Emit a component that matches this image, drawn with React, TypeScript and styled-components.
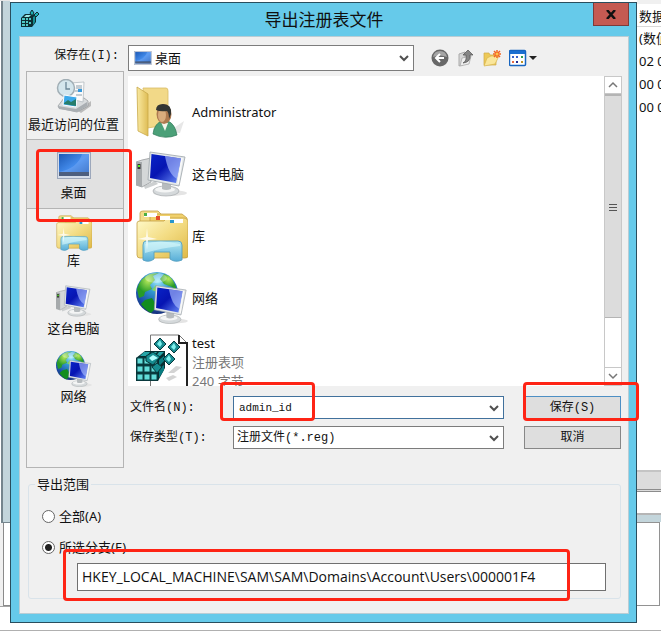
import React, { useState } from "react";
import styled, { createGlobalStyle, css } from "styled-components";

const ui = `"Noto Sans", "Noto Sans CJK SC", sans-serif`;
const fixed = `"Liberation Mono", "Noto Sans CJK SC", monospace`;

const GlobalStyle = createGlobalStyle`
  *, *::before, *::after { box-sizing: border-box; }
  body { margin: 0; background: #fff; color: #111; font: 13px/18px ${ui}; }
  button, input, select { font: inherit; color: inherit; margin: 0; }
`;

const Desktop = styled.div`
  display: grid;
  grid-template-columns: 10px 1fr 24px;
  min-height: 100vh;
  overflow: hidden;
  border-bottom: 1px solid #b0b0b0;
`;

const LeftEdge = styled.div`
  display: flex;
  flex-direction: column;
  border-top: 1px solid #e6e6e6;
`;
const FrameStrip = styled.div`
  height: 522px;
  margin-left: 1px;
  border-left: 2px solid #75858d;
  border-bottom: 1px solid #75858d;
  background: #c3d5db;
`;
const LowerStrip = styled.div`
  height: 84px;
  border-bottom: 1px solid #a5a5a5;
  padding-left: 3px;
  background: #f0f0f0;
  &::before {
    content: "";
    display: block;
    height: 83px;
    border-left: 1px solid #8a8a8a;
    border-bottom: 1px solid #8a8a8a;
    background: #fff;
  }
`;

const RightEdge = styled.div`
  display: flex;
  flex-direction: column;
  overflow: hidden;
  white-space: nowrap;
  border-top: 4px solid #f0f0f0;
`;
const ColumnHead = styled.div`
  height: 23px;
  padding: 3px 0 0 2px;
  border-bottom: 1px solid #d8d8d8;
`;
const ValueList = styled.div`
  height: 443px;
  padding-left: 2px;
  line-height: 23px;
`;
const ScrollStrip = styled.div`
  height: 22px;
  background: #dcdcdc;
  border-top: 2px solid #c4c4c4;
  border-bottom: 3px double #8c8c8c;
`;
const StatusStrip = styled.div`
  height: 30px;
  border-bottom: 7px solid #c3d5db;
  box-shadow: inset 0 -2px #b5b5b5;
`;
const LowerPane = styled.div`
  height: 84px;
  margin-right: 1px;
  border: 1px solid #929292;
  border-left: 0;
`;

const Dialog = styled.section`
  position: relative;
  z-index: 1;
  display: flex;
  flex-direction: column;
  align-self: start;
  min-width: 0;
  margin-top: 2px;
  padding: 0 7px 8px 8px;
  border: 1px solid #294e5e;
  background: #66caea;
`;
const TitleBar = styled.header`
  display: grid;
  grid-template-columns: 36px 1fr 36px;
  height: 33px;
  h1 {
    margin: 0;
    align-self: center;
    text-align: center;
    font-size: 17px;
    line-height: 22px;
    font-weight: 400;
    color: #101010;
  }
`;
const TitleIcon = styled.span`
  padding: 7px 0 0 2px;
`;
const CloseButton = styled.button`
  height: 23px;
  padding: 0;
  border: 1px solid #7d3a3a;
  border-top: 0;
  background: #c55a52;
  display: grid;
  place-items: center;
`;

const Panel = styled.div`
  border: 1px solid #b9cdd5;
  background: #f0f0f0;
  padding: 8px 6px 14px 6px;
`;
const Browser = styled.div`
  display: grid;
  grid-template-columns: 98px 1fr;
  column-gap: 4px;
`;
const FixedLabel = styled.label`
  font: 12px/18px ${fixed};
  white-space: nowrap;
`;
const LookInLabel = styled(FixedLabel)`
  justify-self: end;
  padding: 2px 5px 0 0;
`;
const LookInBar = styled.div`
  display: grid;
  grid-template-columns: minmax(0, 286px) auto;
  justify-content: start;
  align-items: center;
  column-gap: 17px;
  height: 26px;
  margin-bottom: 5px;
`;
const Combo = styled.div<{ $tall?: boolean; $active?: boolean }>`
  position: relative;
  display: flex;
  align-items: center;
  min-width: 0;
  height: ${(p) => (p.$tall ? 26 : 23)}px;
  border: 1px solid ${(p) => (p.$active ? "#41719c" : "#7c7c7c")};
  background: #fff;
  > svg:last-child {
    position: absolute;
    right: 4px;
    pointer-events: none;
  }
`;
const comboField = css`
  flex: 1;
  width: 100%;
  min-width: 0;
  height: 100%;
  border: 0;
  outline: 0;
  padding: 0 18px 0 3px;
  background: transparent;
  appearance: none;
`;
const ComboSelect = styled.select<{ $icon?: boolean }>`
  ${comboField}
  ${(p) =>
    p.$icon
      ? css`
          margin-left: -24px;
          padding-left: 26px;
        `
      : css`
          font: 12px/18px ${fixed};
        `}
`;
const ComboIcon = styled.span`
  display: flex;
  width: 24px;
  padding-left: 5px;
`;
const NameInput = styled.input`
  ${comboField}
  padding-left: 5px;
  font: 11px/16px ${fixed};
`;
const Tools = styled.div`
  display: flex;
  gap: 8px;
`;
const ToolButton = styled.button`
  display: flex;
  padding: 0;
  border: 0;
  background: none;
`;

const Places = styled.nav`
  border: 1px solid #b4b4b4;
  height: 397px;
  margin-top: -5px;
`;
const Place = styled.button<{ $current?: boolean }>`
  position: relative;
  display: flex;
  flex-direction: column;
  align-items: center;
  width: 100%;
  height: 68px;
  padding: 7px 3px 0 0;
  border: 0;
  background: ${(p) => (p.$current ? "#e1e1e1" : "none")};
  box-shadow: ${(p) => (p.$current ? "0 -1px #b4b4b4, 0 1px #b4b4b4" : "none")};
  white-space: nowrap;
`;
const PlaceIcon = styled.span`
  display: grid;
  place-items: center;
  height: 36px;
`;

const FileList = styled.div`
  display: grid;
  grid-template-columns: 1fr 18px;
  grid-template-rows: minmax(0, 1fr);
  height: 310px;
  overflow: hidden;
  background: #fff;
`;
const Files = styled.ul`
  margin: 0;
  padding: 5px 0 0 8px;
  list-style: none;
`;
const FileRow = styled.li`
  display: flex;
  align-items: center;
  gap: 4px;
  min-height: 62px;
  small {
    display: block;
    font-size: 13px;
    color: #777;
  }
  &:last-child {
    min-height: 66px;
  }
`;
const FileText = styled.div`
  line-height: 19px;
`;
const Scrollbar = styled.div`
  display: grid;
  grid-template-rows: 18px 224px 1fr 18px;
  border: 1px solid #c8c8c8;
  border-top: 0;
`;
const ScrollButton = styled.button`
  display: grid;
  place-items: center;
  padding: 0;
  border: 1px solid #c8c8c8;
  border-width: 1px 0;
  background: #fff;
`;
const Thumb = styled.div`
  display: grid;
  place-items: center;
  background: #dcdcdc;
  border: 1px solid #b4b4b4;
  border-width: 2px 0 1px;
`;
const SaveForm = styled.div`
  display: grid;
  grid-template-columns: 98px 1fr 97px;
  column-gap: 20px;
  row-gap: 7px;
  align-items: center;
  margin-top: 10px;
  padding-right: 1px;
  > label { padding-left: 2px; }
`;
const FormField = styled.div`
  position: relative;
  margin-left: -13px;
`;
const ActionSlot = styled.div`
  position: relative;
`;
const ActionButton = styled.button<{ $primary?: boolean }>`
  display: block;
  width: 100%;
  height: 23px;
  padding: 0;
  border: 1px solid ${(p) => (p.$primary ? "#4d8fc4" : "#878787")};
  background: #dedede;
  font: 12px/18px ${fixed};
`;

const Scope = styled.fieldset`
  margin: 7px 1px 0 2px;
  padding: 14px 14px 7px 13px;
  min-width: 0;
  border: 1px solid #d9e3ea;
  border-radius: 3px;
  legend {
    margin-left: -7px;
    padding: 0 2px;
  }
`;
const Choice = styled.label`
  display: flex;
  align-items: center;
  gap: 4px;
  height: 18px;
  margin-bottom: 13px;
  &:nth-of-type(2) { margin-bottom: 7px; }
`;
const Radio = styled.input`
  appearance: none;
  flex: none;
  width: 13px;
  height: 13px;
  border: 1px solid #666;
  border-radius: 50%;
  background: #fff;
  &:checked {
    background: radial-gradient(circle, #202020 0 3px, #fff 4px);
  }
`;
const BranchSlot = styled.div`
  position: relative;
  margin-left: 35px;
`;
const BranchInput = styled.input`
  display: block;
  width: 100%;
  height: 28px;
  padding: 0 4px 2px;
  border: 1px solid #707070;
  border-radius: 0;
  background: #fff;
  outline: 0;
  font-family: "Open Sans", sans-serif;
  font-size: 14px;
`;

const Marker = styled.span<{ $kind: "place" | "name" | "save" | "branch" }>`
  position: absolute;
  z-index: 2;
  pointer-events: none;
  border: 3px solid #fe2415;
  border-radius: 4px;
  ${(p) =>
    ({
      place: "left: 9px; top: 9px; width: 96px; height: 73px;",
      name: "left: -13px; top: -14px; width: 95px; height: 39px;",
      save: "left: -1px; right: -18px; top: -14px; height: 39px;",
      branch: "left: -14px; top: -14px; width: 507px; height: 52px;",
    })[p.$kind]}
`;

const Chevron = ({ up, light }: { up?: boolean; light?: boolean }) => (
  <svg width="10" height="8" viewBox="0 0 10 8" fill="none" stroke={light ? "#777" : "#505050"} strokeWidth={light ? 1.5 : 2}>
    <path d={up ? "M1 6L5 2L9 6" : "M1 2L5 6L9 2"} />
  </svg>
);

const MonitorArt = () => (
  <>
    <ellipse cx="34" cy="43" rx="17" ry="3" fill="#e4e4e4" />
    <ellipse cx="30" cy="41" rx="13" ry="5" fill="#d5d9db" stroke="#a6abad" strokeWidth=".7" />
    <ellipse cx="29" cy="39.5" rx="10" ry="3" fill="#f4f5f5" />
    <path d="M26 31h9v8q-5 2-9 0z" fill="#b6bbbe" />
    <path d="M14 2L49 7L43 36L12 30Z" fill="#e4e8ea" stroke="#9da5aa" strokeWidth=".8" />
    <path d="M15.500 4L45 8.500L40 33L14 28Z" fill="url(#screen)" />
    <path d="M29 6L45 8.500L41 29Q32 24 29 6Z" fill="#a9bdff" opacity=".65" />
    <path d="M46 8L42 34" stroke="#fafafa" strokeWidth="1.5" />
  </>
);

const Computer = ({ size = 52 }: { size?: number }) => (
  <svg width={size} height={size} viewBox="0 0 52 48">
    <defs>
      <linearGradient id="screen" x2="1" y2="1">
        <stop stopColor="#0924c8" /><stop offset=".45" stopColor="#0614b2" /><stop offset="1" stopColor="#6e92fb" />
      </linearGradient>
    </defs>
    <path d="M8 36L19 31L22 34L9 39Z" fill="#cccfd0" />
    <path d="M0 12L6 10L15 8L15 32L6 37L0 35Z" fill="#d4d7d8" stroke="#979b9d" strokeWidth=".8" />
    <path d="M0 12L6 12L6 37L0 35Z" fill="#a6aaac" />
    <rect x="1.500" y="14" width="3" height="5" fill="#333" /><rect x="2" y="15" width="2" height="2" fill="#55ed22" />
    <MonitorArt />
  </svg>
);

const Globe = ({ size = 52 }: { size?: number }) => (
  <svg width={size} height={size} viewBox="0 0 52 52">
    <defs>
      <radialGradient id="sea" cx=".52" cy=".22" r=".8">
        <stop stopColor="#9fe9fa" /><stop offset=".35" stopColor="#3297d0" /><stop offset=".75" stopColor="#1b4fa6" /><stop offset="1" stopColor="#172e78" />
      </radialGradient>
      <radialGradient id="land" cx=".5" cy=".3"><stop stopColor="#b5e95b" /><stop offset="1" stopColor="#279b28" /></radialGradient>
    </defs>
    <circle cx="21" cy="21" r="21" fill="url(#sea)" />
    <path d="M14 2Q4 6 1 17L3 26L8 24L9 20L16 17L14 13L19 8L17 4L23 1Z" fill="url(#land)" />
    <path d="M28 2L24 7L28 12L36 15L41 19Q39 9 33 4Z" fill="url(#land)" />
    <path d="M9 28L16 26L19 31L18 38L15 41Q9 38 5 32Z" fill="#128d20" />
    <path d="M20 13L24 16L21 20L16 18Z" fill="#7bd760" />
    <ellipse cx="20" cy="6" rx="11" ry="5" fill="#fff" opacity=".3" />
    <g transform="translate(8 12) scale(.86)"><MonitorArt /></g>
  </svg>
);

const Library = ({ size = 52 }: { size?: number }) => (
  <svg width={size} height={size} viewBox="0 0 52 52">
    <defs>
      <linearGradient id="lib" x2="1" y2="1"><stop stopColor="#fffacb" /><stop offset=".5" stopColor="#f3dc83" /><stop offset="1" stopColor="#dfb947" /></linearGradient>
      <linearGradient id="stand" x2="0" y2="1"><stop stopColor="#b5eaf2" /><stop offset="1" stopColor="#57add7" /></linearGradient>
    </defs>
    <g stroke="#c4a044" strokeWidth=".8">
      <path d="M4 13V3Q4 1 7 1H22L25 4V13Z" fill="#f3dc8a" />
      <path d="M14 13V7L18 4H46L51 8V17H14Z" fill="#f0d06b" />
      <path d="M1 13Q1 11 4 11H28L31 8H47Q52 8 52 12V46Q52 48 49 48H4Q1 48 1 45Z" fill="url(#lib)" />
    </g>
    <path d="M8 3h13v4H8zM20 6h14v4H20zM34 9h13v4H34z" fill="#fff" />
    <rect x="8" y="3" width="3" height="3" fill="#4caf42" /><rect x="20" y="6" width="4" height="4" fill="#e34c2a" /><rect x="34" y="10" width="4" height="3" fill="#2696cd" />
    <path d="M10 31H42Q46 31 46 35V50Q39 53 34 49V42H18V49Q13 53 7 50V35Q7 31 10 31Z" fill="url(#stand)" stroke="#569fc0" strokeWidth=".9" />
    <path d="M9 34Q23 29 44 34V36Q25 38 9 43Z" fill="#d9f8fb" opacity=".6" />
    <path d="M11 18L12 27L21 29L12 30L11 40L10 30L2 29L10 27Z" fill="#fff" opacity=".8" />
  </svg>
);

const UserFolder = () => (
  <svg width="52" height="52" viewBox="0 0 52 52">
    <defs><linearGradient id="fold" x2="1"><stop stopColor="#f9e9a1" /><stop offset="1" stopColor="#dfbd56" /></linearGradient></defs>
    <path d="M32 46L48 35L44 47Z" fill="#e7e7e7" />
    <path d="M7 2H30Q32 2 32 5V39L11 42Z" fill="#f2d988" stroke="#d8bb66" strokeWidth=".8" />
    <path d="M1 1L12 8V50L2 45Z" fill="url(#fold)" stroke="#c8a849" strokeWidth=".8" />
    <path d="M17 48Q18 37 27 35H32Q39 38 41 49Q29 54 17 48Z" fill="#4ba078" stroke="#2d7756" strokeWidth=".7" />
    <path d="M25 36L29 45L32 37Z" fill="#f5f5ec" />
    <ellipse cx="28" cy="28" rx="7.500" ry="10" fill="#ae7a50" />
    <ellipse cx="26" cy="29" rx="4" ry="7" fill="#d9ac7d" />
    <path d="M20 24Q20 18 27 18Q36 18 35 28L33 33Q33 27 31 25Q24 26 20 24Z" fill="#343633" />
  </svg>
);

const Screen = ({ size = 34 }: { size?: number }) => (
  <svg width={size} height={Math.round(size * 0.79)} viewBox="0 0 34 27">
    <defs><linearGradient id="desk" x2="1" y2="1"><stop stopColor="#1c59b5" /><stop offset=".5" stopColor="#438beb" /><stop offset="1" stopColor="#1852ab" /></linearGradient></defs>
    <rect x=".5" y=".5" width="33" height="26" fill="#d5dde9" stroke="#9ca7bb" />
    <rect x="2" y="2" width="30" height="22" fill="url(#desk)" />
    <path d="M2 20Q21 16 25 2H32V20Z" fill="#8ebaff" opacity=".35" />
    <rect x="2" y="20" width="30" height="4" fill="#4d5f7f" />
  </svg>
);

const Recent = () => (
  <svg width="36" height="36" viewBox="0 0 36 36">
    <path d="M22 32L35 22V27L25 34Z" fill="#bbb" />
    <path d="M2 27L8 19H28L32 22V27L21 33L3 29Z" fill="#d8dbdd" stroke="#8f9497" strokeWidth=".7" />
    <path d="M2 27L20 30L31 23V27L21 33L3 30Z" fill="#a9aeb2" />
    <path d="M14 4L28 3L27 23L15 20Z" fill="#fafafa" stroke="#abb3b9" strokeWidth=".7" />
    <path d="M20 7h6M20 9h6M19 12h7M20 16h6" stroke="#8b9eac" /><path d="M22 10h4v3h-4z" fill="#3599dc" />
    <circle cx="10" cy="9" r="8.500" fill="#d4e6ed" stroke="#a1aeb5" strokeWidth="1.500" />
    <path d="M10 3V10H14" stroke="#6b8797" strokeWidth="1.300" fill="none" />
    <path d="M8 16L21 18L20 28L7 26Z" fill="#3ca9ea" stroke="#fff" />
    <path d="M8 24L12 21L15 23L20 20V27L8 25Z" fill="#267d6b" />
  </svg>
);

const Cube = () => (
  <>
    <path d="M0 24L9 17H29V34L22 47H0Z" fill="#062f32" />
    <g fill="#62dcd9" stroke="#0c4548">
      {[24, 32, 40].map((y) => [1, 8, 15].map((x) => <rect key={`${x}-${y}`} x={x} y={y} width="6" height="6" />))}
    </g>
    <path d="M8 18h6l-3 4H4zM16 18h5l-3 4h-6zM23 18h5l-5 5h-4z" fill="#25a5a7" />
    <path d="M23 26l5-4v5l-5 5zM23 35l5-4v5l-5 8z" fill="#087d81" />
    <path d="M10 22l7-4 7 5-7 8-7-4z" fill="#168d91" stroke="#06383b" /><path d="M13 24l4-3 5 3-6 3z" fill="#b4ffff" />
    <path d="M16 33l5-4 5 4-5 6z" fill="#168d91" stroke="#06383b" />
  </>
);
const Diamond = ({ x, y }: { x: number; y: number }) => (
  <g transform={`translate(${x} ${y})`}>
    <path d="M0-6L6 0L0 6L-6 0Z" fill="#178b90" stroke="#07383b" /><path d="M-3 0L0-4L2 0L0 3Z" fill="#7ef1ed" />
  </g>
);
const RegFile = () => (
  <svg width="52" height="56" viewBox="0 0 52 56">
    <path d="M14.500 1H43L51 9V54H14.500Z" fill="#fff" stroke="#777" /><path d="M43 1V9H51V54" fill="none" stroke="#222" strokeWidth="2" />
    <path d="M32 39l8-7 6 1-8 6zM30 44l7-3 4 2-8 4z" fill="#d4d4d4" />
    <Cube /><Diamond x={24} y={10} /><Diamond x={38} y={13} /><Diamond x={33} y={25} />
  </svg>
);
const RegIcon = () => (
  <svg width="18" height="18" viewBox="0 0 18 18">
    <path d="M0 8L4 4H12L15 6V12L11 17H0Z" fill="#0d2e32" />
    <path d="M1 8h3v2H1zM5 8h2v2H5zM1 11h3v2H1zM5 11h2v2H5zM1 14h3v2H1zM5 14h2v2H5zM8 8h2v2H8zM8 12h2v2H8z" fill="#4fc9c5" />
    <path d="M5 5h5l-2 2H3z" fill="#9be9e6" /><path d="M12 7l2-1v6l-2 3z" fill="#148e92" />
    <path d="M9 3l2-3 2 3-2 3zM13 5l3-3 2 2-3 3z" fill="#1bafb0" stroke="#102d30" />
  </svg>
);

const BackIcon = () => (
  <svg width="18" height="18" viewBox="0 0 18 18"><circle cx="9" cy="9" r="8.500" fill="#686868" /><path d="M2 8Q3 2 9 2T16 8Q9 5 2 8Z" fill="#a5a5a5" /><path d="M13 9H5M9 5L5 9L9 13" stroke="#fff" strokeWidth="2" fill="none" /></svg>
);
const UpIcon = () => (
  <svg width="18" height="18" viewBox="0 0 18 18"><path d="M2 5L8 3V15L2 17Z" fill="#d5d5d5" stroke="#aaa" /><path d="M5 9L14 7L12 15L3 17Z" fill="#eee" stroke="#aaa" strokeWidth=".8" /><path d="M6 14Q10 12 9 6H6L11 1L16 6H13Q14 13 6 14Z" fill="#858585" stroke="#505050" strokeWidth=".7" /></svg>
);
const NewFolderIcon = () => (
  <svg width="18" height="18" viewBox="0 0 18 18"><path d="M1 4h5l1 2h6v10H1Z" fill="#edc957" stroke="#d0aa47" strokeWidth=".7" /><path d="M4 9L8 7H16L12 15L1 17Z" fill="#fae69a" stroke="#d9b64d" strokeWidth=".7" /><path d="M14 1v8M10 5h8M11 2l6 6M17 2l-6 6" stroke="#f26422" strokeWidth="1.500" /><circle cx="14" cy="5" r="1.500" fill="#ffc14c" /></svg>
);
const ViewIcon = () => (
  <svg width="28" height="18" viewBox="0 0 28 18"><rect x=".5" y="1.500" width="16" height="15" rx="1" fill="#fff" stroke="#1765c0" strokeWidth="1.500" /><path d="M1 2h15v3H1z" fill="#1b70d1" /><g fill="#3a64c9"><rect x="3" y="7" width="2" height="2" /><rect x="7" y="7" width="2" height="2" /><rect x="3" y="12" width="2" height="2" fill="#e76b45" /><rect x="7" y="12" width="2" height="2" fill="#222d92" /><rect x="12" y="7" width="2" height="2" fill="#2e9b4d" /><rect x="12" y="12" width="2" height="2" fill="#bf9225" /></g><path d="M20 7h8l-4 4z" fill="#222" /></svg>
);

const places = [
  { name: "最近访问的位置", icon: <Recent /> },
  { name: "桌面", icon: <Screen /> },
  { name: "库", icon: <Library size={36} /> },
  { name: "这台电脑", icon: <Computer size={36} /> },
  { name: "网络", icon: <Globe size={36} /> },
];
const files = [
  { name: "Administrator", icon: <UserFolder /> },
  { name: "这台电脑", icon: <Computer /> },
  { name: "库", icon: <Library /> },
  { name: "网络", icon: <Globe /> },
  { name: "test", icon: <RegFile />, notes: ["注册表项", "240 字节"] },
];
const tools = [
  { name: "后退", icon: <BackIcon /> },
  { name: "向上一级", icon: <UpIcon /> },
  { name: "新建文件夹", icon: <NewFolderIcon /> },
  { name: "查看", icon: <ViewIcon /> },
];

export default function App() {
  const [scope, setScope] = useState("branch");
  return (
    <Desktop>
      <GlobalStyle />
      <LeftEdge><FrameStrip /><LowerStrip /></LeftEdge>
      <Dialog role="dialog" aria-labelledby="title">
        <TitleBar>
          <TitleIcon><RegIcon /></TitleIcon>
          <h1 id="title">导出注册表文件</h1>
          <CloseButton aria-label="关闭">
            <svg width="10" height="9" viewBox="0 0 10 9"><path d="M1 0L9 9M9 0L1 9" stroke="#111" strokeWidth="2.500" /></svg>
          </CloseButton>
        </TitleBar>
        <Panel>
          <Browser>
            <LookInLabel htmlFor="lookin">保存在(I):</LookInLabel>
            <LookInBar>
              <Combo $tall>
                <ComboIcon><Screen size={18} /></ComboIcon>
                <ComboSelect id="lookin" $icon><option>桌面</option></ComboSelect>
                <Chevron />
              </Combo>
              <Tools>
                {tools.map((t) => <ToolButton key={t.name} aria-label={t.name}>{t.icon}</ToolButton>)}
              </Tools>
            </LookInBar>
            <Places>
              {places.map((p, i) => (
                <Place key={p.name} $current={i === 1}>
                  <PlaceIcon>{p.icon}</PlaceIcon>{p.name}
                  {i === 1 && <Marker $kind="place" />}
                </Place>
              ))}
            </Places>
            <div>
              <FileList>
                <Files>
                  {files.map((f) => (
                    <FileRow key={f.name}>
                      {f.icon}
                      <FileText>{f.name}{f.notes?.map((n) => <small key={n}>{n}</small>)}</FileText>
                    </FileRow>
                  ))}
                </Files>
                <Scrollbar>
                  <ScrollButton aria-label="向上滚动"><Chevron up light /></ScrollButton>
                  <Thumb><svg width="8" height="8" viewBox="0 0 8 8"><path d="M0 1.500h8M0 4.500h8M0 7.500h8" stroke="#555" /></svg></Thumb>
                  <span />
                  <ScrollButton aria-label="向下滚动"><Chevron light /></ScrollButton>
                </Scrollbar>
              </FileList>
              <SaveForm>
                <FixedLabel htmlFor="name">文件名(N):</FixedLabel>
                <FormField>
                  <Combo $active><NameInput id="name" defaultValue="admin_id" autoFocus /><Chevron /></Combo>
                  <Marker $kind="name" />
                </FormField>
                <ActionSlot>
                  <ActionButton $primary>保存(S)</ActionButton>
                  <Marker $kind="save" />
                </ActionSlot>
                <FixedLabel htmlFor="type">保存类型(T):</FixedLabel>
                <FormField>
                  <Combo><ComboSelect id="type"><option>注册文件(*.reg)</option></ComboSelect><Chevron /></Combo>
                </FormField>
                <ActionButton>取消</ActionButton>
              </SaveForm>
            </div>
          </Browser>
          <Scope>
            <legend>导出范围</legend>
            <Choice><Radio type="radio" name="scope" checked={scope === "all"} onChange={() => setScope("all")} />全部(A)</Choice>
            <Choice><Radio type="radio" name="scope" checked={scope === "branch"} onChange={() => setScope("branch")} />所选分支(E)</Choice>
            <BranchSlot>
              <BranchInput aria-label="所选分支" defaultValue="HKEY_LOCAL_MACHINE\SAM\SAM\Domains\Account\Users\000001F4" />
              <Marker $kind="branch" />
            </BranchSlot>
          </Scope>
        </Panel>
      </Dialog>
      <RightEdge>
        <ColumnHead>数据</ColumnHead>
        <ValueList>
          <div>(数值</div><div>02 00</div><div>00 00</div><div>00 00</div>
        </ValueList>
        <ScrollStrip /><StatusStrip /><LowerPane />
      </RightEdge>
    </Desktop>
  );
}
